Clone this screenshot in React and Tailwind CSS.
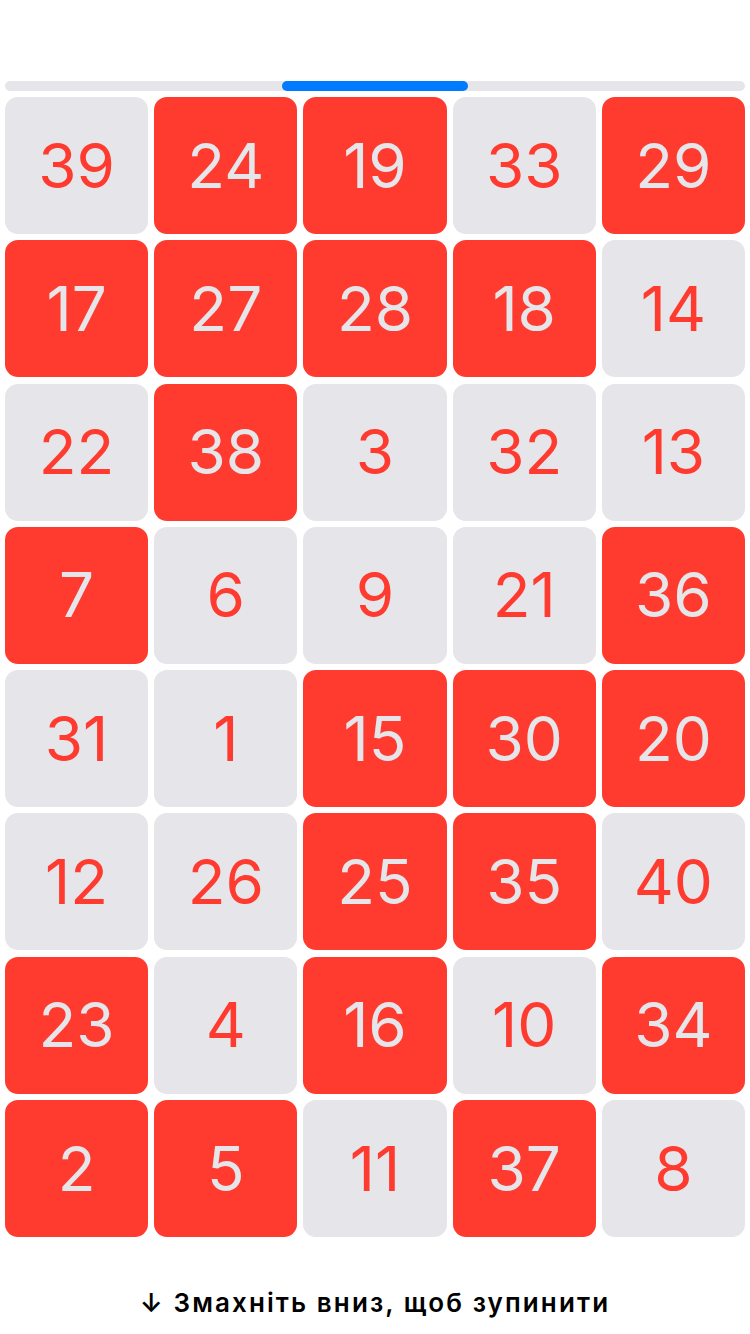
import React from "react";

const cells = [
  [39, 0], [24, 1], [19, 1], [33, 0], [29, 1],
  [17, 1], [27, 1], [28, 1], [18, 1], [14, 0],
  [22, 0], [38, 1], [3, 0], [32, 0], [13, 0],
  [7, 1], [6, 0], [9, 0], [21, 0], [36, 1],
  [31, 0], [1, 0], [15, 1], [30, 1], [20, 1],
  [12, 0], [26, 0], [25, 1], [35, 1], [40, 0],
  [23, 1], [4, 0], [16, 1], [10, 0], [34, 1],
  [2, 1], [5, 1], [11, 0], [37, 1], [8, 0],
];

export default function App() {
  return (
    <div
      className="w-[750px] h-[1334px] bg-white flex flex-col px-[5px] pt-[81px]"
      style={{ fontFamily: "Inter, 'Noto Sans', sans-serif" }}
    >
      <div className="h-[10px] w-full rounded-full bg-[#e5e5ea] flex">
        <div className="ml-[277px] w-[186px] h-full rounded-full bg-[#007aff]" />
      </div>
      <div className="mt-[6px] grid grid-cols-5 gap-x-[6px] gap-y-[6.3px]">
        {cells.map(([n, red]) => (
          <div
            key={n}
            className={
              red
                ? "h-[137px] rounded-[13px] bg-[#ff3b30] text-[#e5e5ea] flex items-center justify-center text-[62px] leading-none"
                : "h-[137px] rounded-[13px] bg-[#e5e5ea] text-[#ff3b30] flex items-center justify-center text-[62px] leading-none"
            }
          >
            {n}
          </div>
        ))}
      </div>
      <div className="mt-[51px] text-center text-[26px] leading-[30px] font-semibold text-black tracking-[2.1px]">
        ↓ Змахніть вниз, щоб зупинити
      </div>
    </div>
  );
}
